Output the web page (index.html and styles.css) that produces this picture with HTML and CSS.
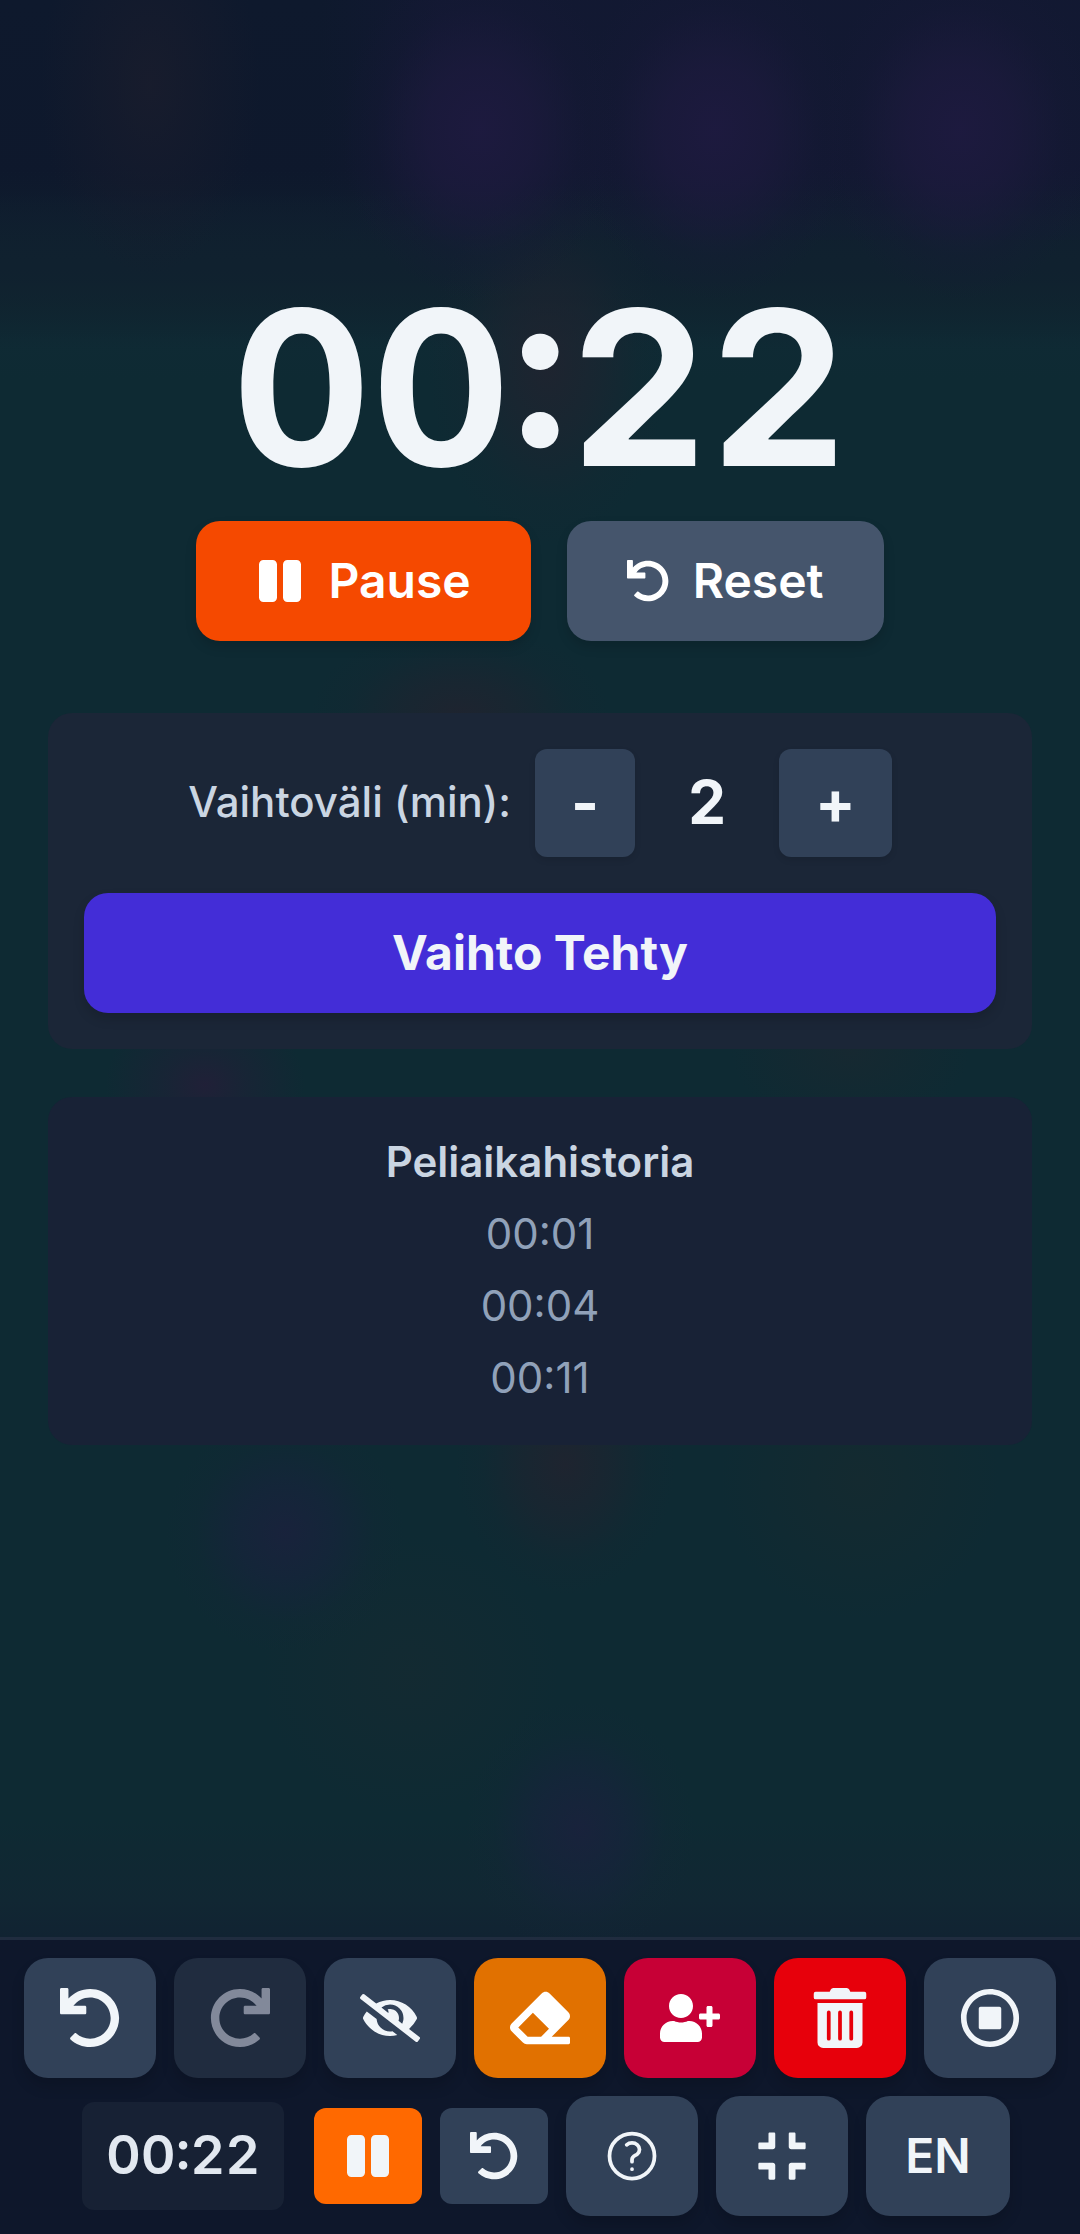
FILE: index.html
```html
<!DOCTYPE html>
<html lang="fi">
<head>
<meta charset="utf-8">
<title>Peliaika</title>
<link rel="stylesheet" href="styles.css">
</head>
<body>
<svg class="defs" aria-hidden="true">
  <symbol id="pause" viewBox="0 0 448 512"><path d="M144 479H48c-26.500 0-48-21.500-48-48V79c0-26.500 21.500-48 48-48h96c26.500 0 48 21.500 48 48v352c0 26.500-21.500 48-48 48zm304-48V79c0-26.500-21.500-48-48-48h-96c-26.500 0-48 21.500-48 48v352c0 26.500 21.500 48 48 48h96c26.500 0 48-21.500 48-48z"/></symbol>
  <symbol id="undo" viewBox="0 0 512 512"><path d="M212.333 224.333H12c-6.627 0-12-5.373-12-12V12C0 5.373 5.373 0 12 0h48c6.627 0 12 5.373 12 12v78.112C117.773 39.279 184.26 7.47 258.175 8.007c136.906.994 246.448 111.623 246.157 248.532C504.041 393.258 393.12 504 256.333 504c-64.089 0-122.496-24.313-166.51-64.215-5.099-4.622-5.334-12.554-.467-17.42l33.967-33.967c4.474-4.474 11.662-4.717 16.401-.525C170.76 415.336 211.58 432 256.333 432c97.268 0 176-78.716 176-176 0-97.267-78.716-176-176-176-58.496 0-110.28 28.476-142.274 72.333h98.274c6.627 0 12 5.373 12 12v48c0 6.627-5.373 12-12 12z"/></symbol>
</svg>
<div class="app">
  <main class="timer">
    <div class="clock">00:22</div>
    <div class="controls">
      <button class="btn btn-pause"><svg class="icon"><use href="#pause"/></svg><span>Pause</span></button>
      <button class="btn btn-reset"><svg class="icon-sm"><use href="#undo"/></svg><span>Reset</span></button>
    </div>
    <section class="card card-interval">
      <div class="interval">
        <span class="interval-label">Vaihtoväli (min):</span>
        <button class="step">-</button>
        <span class="interval-value">2</span>
        <button class="step">+</button>
      </div>
      <button class="btn btn-confirm">Vaihto Tehty</button>
    </section>
    <section class="card card-history">
      <h2 class="history-title">Peliaikahistoria</h2>
      <div class="history-item">00:01</div>
      <div class="history-item">00:04</div>
      <div class="history-item">00:11</div>
    </section>
  </main>
  <nav class="bar">
    <div class="bar-row">
      <button class="tool"><svg class="icon-lg"><use href="#undo"/></svg></button>
      <button class="tool disabled"><svg class="icon-lg flip"><use href="#undo"/></svg></button>
      <button class="tool"><svg class="icon-lg" viewBox="0 0 640 512"><path d="M320 400c-75.850 0-137.250-58.710-142.900-133.110L72.200 185.820c-13.790 17.300-26.480 35.590-36.720 55.590a32.350 32.350 0 0 0 0 29.190C89.710 376.410 197.070 448 320 448c26.910 0 52.870-4 77.890-10.460L346 397.390a144.130 144.130 0 0 1-26 2.610zm313.820 58.100l-110.550-85.440a331.250 331.250 0 0 0 81.250-102.070 32.350 32.350 0 0 0 0-29.190C550.290 135.590 442.930 64 320 64a308.150 308.150 0 0 0-147.320 37.700L45.460 3.370A16 16 0 0 0 23 6.180L3.370 31.450A16 16 0 0 0 6.180 53.900l588.360 454.730a16 16 0 0 0 22.460-2.810l19.640-25.270a16 16 0 0 0-2.820-22.450zm-183.720-142l-39.300-30.380A94.750 94.750 0 0 0 416 256a94.760 94.760 0 0 0-121.310-92.210A47.650 47.650 0 0 1 304 192a46.640 46.640 0 0 1-1.540 10l-73.610-56.890A142.310 142.310 0 0 1 320 112a143.920 143.920 0 0 1 144 144c0 21.630-5.290 41.790-13.900 60.110z"/></svg></button>
      <button class="tool amber"><svg class="icon-lg" viewBox="0 0 512 512"><path d="M497.941 273.941c18.745-18.745 18.745-49.137 0-67.882l-160-160c-18.745-18.745-49.136-18.746-67.883 0l-256 256c-18.745 18.745-18.745 49.137 0 67.882l96 96A48.004 48.004 0 0 0 144 480h356c6.627 0 12-5.373 12-12v-40c0-6.627-5.373-12-12-12H355.883l142.058-142.059zm-302.627-62.627l137.373 137.373L265.373 416H150.628l-80-80 124.686-124.686z"/></svg></button>
      <button class="tool rose"><svg class="icon-lg" viewBox="0 0 640 512"><path d="M624 208h-64v-64c0-8.800-7.200-16-16-16h-32c-8.800 0-16 7.200-16 16v64h-64c-8.800 0-16 7.200-16 16v32c0 8.800 7.200 16 16 16h64v64c0 8.800 7.200 16 16 16h32c8.800 0 16-7.200 16-16v-64h64c8.800 0 16-7.200 16-16v-32c0-8.800-7.200-16-16-16zm-400 48c70.700 0 128-57.300 128-128S294.700 0 224 0 96 57.300 96 128s57.300 128 128 128zm89.600 32h-16.700c-22.200 10.200-46.900 16-72.900 16s-50.600-5.800-72.900-16h-16.700C60.200 288 0 348.200 0 422.400V464c0 26.500 21.500 48 48 48h352c26.500 0 48-21.500 48-48v-41.600c0-74.200-60.200-134.400-134.400-134.400z"/></svg></button>
      <button class="tool red"><svg class="icon-lg" viewBox="0 0 448 512"><path d="M32 464a48 48 0 0 0 48 48h288a48 48 0 0 0 48-48V128H32zm272-256a16 16 0 0 1 32 0v224a16 16 0 0 1-32 0zm-96 0a16 16 0 0 1 32 0v224a16 16 0 0 1-32 0zm-96 0a16 16 0 0 1 32 0v224a16 16 0 0 1-32 0zM432 32H312l-9.400-18.700A24 24 0 0 0 281.100 0H166.800a23.720 23.720 0 0 0-21.400 13.300L136 32H16A16 16 0 0 0 0 48v32a16 16 0 0 0 16 16h416a16 16 0 0 0 16-16V48a16 16 0 0 0-16-16z"/></svg></button>
      <button class="tool"><svg class="icon-lg" viewBox="0 0 512 512"><path d="M504 256C504 119 393 8 256 8S8 119 8 256s111 248 248 248 248-111 248-248zm-448 0c0-110.500 89.500-200 200-200s200 89.500 200 200-89.500 200-200 200S56 366.500 56 256zm296-80v160c0 8.800-7.200 16-16 16H176c-8.800 0-16-7.200-16-16V176c0-8.800 7.200-16 16-16h160c8.800 0 16 7.200 16 16z"/></svg></button>
    </div>
    <div class="bar-row">
      <div class="mini-clock">00:22</div>
      <button class="mini orange"><svg class="icon"><use href="#pause"/></svg></button>
      <button class="mini"><svg class="icon"><use href="#undo"/></svg></button>
      <button class="tool"><svg class="icon-lg outline" viewBox="0 0 24 24"><path d="M9.879 7.519c1.171-1.025 3.071-1.025 4.242 0 1.172 1.025 1.172 2.687 0 3.712-.203.179-.43.326-.67.442-.745.361-1.450.999-1.450 1.827v.750M21 12a9 9 0 11-18 0 9 9 0 0118 0zm-9 5.250h.008v.008H12v-.008z"/></svg></button>
      <button class="tool"><svg class="icon-md" viewBox="0 0 448 512"><path d="M436 192H312c-13.300 0-24-10.700-24-24V44c0-6.600 5.400-12 12-12h40c6.600 0 12 5.400 12 12v84h84c6.600 0 12 5.400 12 12v40c0 6.600-5.400 12-12 12zm-276-24V44c0-6.600-5.400-12-12-12h-40c-6.600 0-12 5.400-12 12v84H12c-6.600 0-12 5.400-12 12v40c0 6.600 5.400 12 12 12h124c13.300 0 24-10.700 24-24zm0 300V344c0-13.300-10.700-24-24-24H12c-6.600 0-12 5.400-12 12v40c0 6.600 5.400 12 12 12h84v84c0 6.600 5.400 12 12 12h40c6.600 0 12-5.400 12-12zm192 0v-84h84c6.600 0 12-5.400 12-12v-40c0-6.600-5.400-12-12-12H312c-13.300 0-24 10.700-24 24v124c0 6.600 5.400 12 12 12h40c6.600 0 12-5.400 12-12z"/></svg></button>
      <button class="tool lang">EN</button>
    </div>
  </nav>
</div>
</body>
</html>
```
FILE: styles.css
```css
* { box-sizing: border-box; margin: 0; }

body {
  font-family: Inter, "Liberation Sans", sans-serif;
  color: #f1f5f9;
  background: #0e2a33;
}

button {
  border: 0;
  padding: 0;
  font: inherit;
  color: inherit;
}

svg { display: block; fill: currentColor; }
.defs { position: absolute; width: 0; height: 0; }
.icon-sm { width: 42px; height: 42px; }
.icon { width: 48px; height: 48px; }
.icon-md { width: 54px; height: 54px; }
.icon-lg { width: 60px; height: 60px; }
.flip { transform: scaleX(-1); }
.outline {
  fill: none;
  stroke: currentColor;
  stroke-width: 1.5;
  stroke-linecap: round;
  stroke-linejoin: round;
}

.app {
  --violet: rgba(30, 26, 64, .9), rgba(29, 26, 62, .7) 38%, rgba(24, 25, 56, .25) 74%, transparent;
  --maroon: rgba(33, 35, 47, .85), rgba(30, 36, 48, .6) 40%, rgba(24, 38, 49, .2) 75%, transparent;
  --indigo: rgba(25, 34, 60, .95), rgba(23, 35, 60, .65) 40%, rgba(20, 38, 55, .2) 75%, transparent;
  display: flex;
  flex-direction: column;
  width: 1080px;
  height: 2234px;
  overflow: hidden;
  background:
    radial-gradient(110px 190px at 150px 85px, rgba(26, 29, 45, .8), rgba(24, 28, 45, .5) 45%, transparent),
    radial-gradient(140px 170px at 480px 130px, var(--violet)),
    radial-gradient(140px 170px at 715px 130px, var(--violet)),
    radial-gradient(140px 170px at 960px 130px, var(--violet)),
    radial-gradient(120px 180px at 548px 365px, var(--maroon)),
    radial-gradient(150px 90px at 460px 715px, var(--maroon)),
    radial-gradient(100px 80px at 205px 1085px, rgba(34, 31, 56, .9), rgba(30, 33, 55, .6) 40%, transparent),
    radial-gradient(120px 80px at 850px 1050px, rgba(26, 40, 48, .7), transparent),
    radial-gradient(110px 130px at 565px 1465px, var(--maroon)),
    radial-gradient(120px 120px at 285px 1533px, var(--indigo)),
    radial-gradient(115px 130px at 580px 1830px, var(--indigo)),
    radial-gradient(140px 140px at 860px 1480px, rgba(24, 42, 46, .6), transparent),
    radial-gradient(150px 140px at 410px 1675px, rgba(21, 42, 49, .7), transparent),
    linear-gradient(transparent 170px, #10212f 265px, transparent 350px) 0 0 / 1080px 350px no-repeat,
    linear-gradient(90deg, transparent 320px, rgba(23, 24, 56, .45) 440px, rgba(23, 24, 56, .45)) 0 0 / 1080px 240px no-repeat,
    linear-gradient(#0e192d 0, #0e182c 190px, #0f1e2f 245px, #10262f 290px, #0f2a34 340px, #0e2a33 380px, #0e2a33 1820px, #112733 1900px, #112332 1937px);
}

.timer {
  flex: 1;
  display: flex;
  flex-direction: column;
  align-items: center;
  padding: 280px 48px 0;
}

.clock {
  height: 241px;
  font-size: 216px;
  line-height: 216px;
  font-weight: 700;
  font-variant-numeric: tabular-nums;
}

.controls { display: flex; gap: 36px; }

.btn {
  display: flex;
  align-items: center;
  justify-content: center;
  gap: 24px;
  height: 120px;
  padding: 0 60px;
  border-radius: 24px;
  font-size: 48px;
  line-height: 72px;
  font-weight: 600;
  box-shadow: 0 6px 12px rgba(0, 0, 0, .14);
}
.btn-pause { background: #f54900; color: #fff; }
.btn-reset { background: #45556c; color: #fff; }
.btn-confirm { width: 100%; background: #432dd7; font-weight: 700; }

.card {
  display: flex;
  flex-direction: column;
  align-items: center;
  width: 984px;
  padding: 36px;
  border-radius: 24px;
}
.card-interval { gap: 36px; margin-top: 72px; background: #1b2637; }
.card-history { gap: 12px; margin-top: 48px; background: #182236; }

.interval { display: flex; align-items: center; gap: 24px; }
.interval-label {
  padding-bottom: 2px;
  font-size: 42px;
  line-height: 58px;
  font-weight: 500;
  color: #cad5e2;
}
.interval-value {
  width: 96px;
  padding-bottom: 2px;
  font-size: 60px;
  line-height: 82px;
  font-weight: 700;
  text-align: center;
}
.step {
  height: 108px;
  padding: 0 36px 2px;
  border-radius: 12px;
  background: #314158;
  font-size: 60px;
  line-height: 84px;
  font-weight: 700;
  box-shadow: 0 3px 6px rgba(0, 0, 0, .1);
}

.history-title,
.history-item {
  padding-bottom: 2px;
  font-size: 42px;
  line-height: 58px;
}
.history-title { font-weight: 600; color: #cad5e2; }
.history-item { color: #90a1b9; }

.bar {
  display: flex;
  flex-direction: column;
  gap: 18px;
  padding: 18px 0;
  border-top: 3px solid #202c3f;
  background: #0e172b;
}
.bar-row {
  display: flex;
  align-items: center;
  justify-content: center;
  gap: 18px;
}
.tool {
  display: flex;
  align-items: center;
  justify-content: center;
  width: 132px;
  height: 120px;
  border-radius: 24px;
  background: #314158;
  box-shadow: 0 9px 14px rgba(0, 0, 0, .14);
}
.disabled { background: #202c3f; color: #82899a; }
.amber { background: #e17100; color: #fff; }
.rose { background: #c70036; color: #fff; }
.red { background: #e7000b; }
.lang {
  width: 144px;
  padding-bottom: 2px;
  font-size: 48px;
  font-weight: 600;
}

.mini-clock {
  width: 202px;
  height: 108px;
  margin: 0 12px;
  border-radius: 12px;
  background: #172134;
  color: #e2e8f0;
  font-size: 54px;
  line-height: 106px;
  font-weight: 600;
  font-variant-numeric: tabular-nums;
  text-align: center;
}
.mini {
  display: flex;
  align-items: center;
  justify-content: center;
  width: 108px;
  height: 96px;
  border-radius: 12px;
  background: #314158;
}
.orange { background: #ff6900; }
```
